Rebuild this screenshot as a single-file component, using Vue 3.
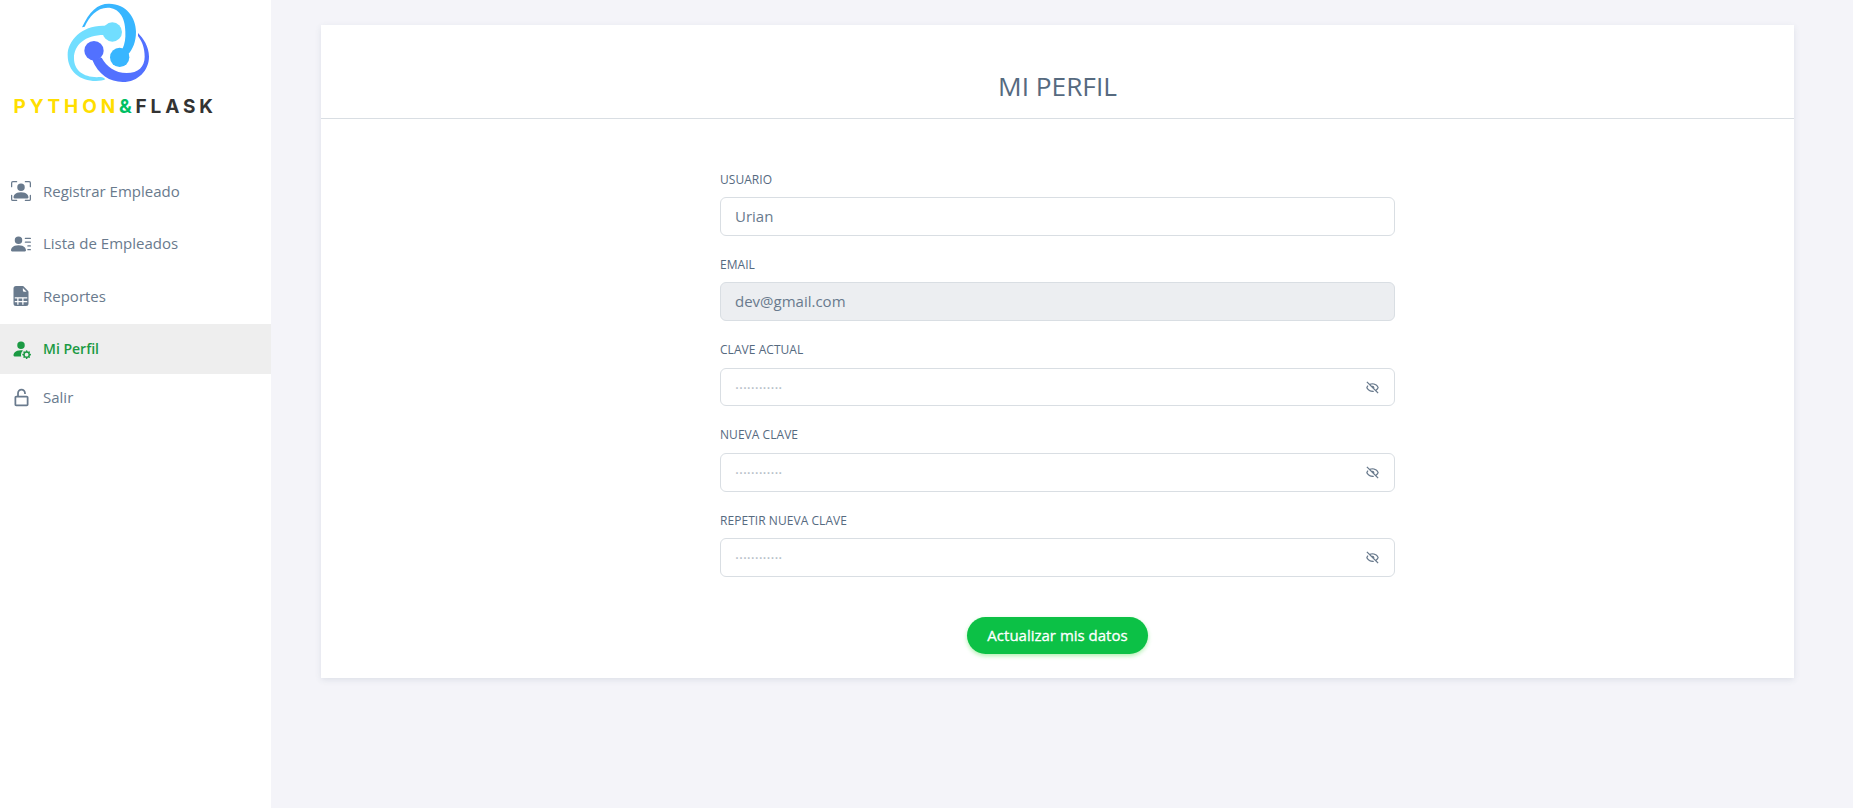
<script setup>
const menu = [
  {
    label: 'Registrar Empleado', cls: 'first', box: '0 0 16 16',
    d: 'M1.5 1a.5.5 0 0 0-.5.5v3a.5.5 0 0 1-1 0v-3A1.5 1.5 0 0 1 1.5 0h3a.5.5 0 0 1 0 1h-3zM11 .5a.5.5 0 0 1 .5-.5h3A1.5 1.5 0 0 1 16 1.5v3a.5.5 0 0 1-1 0v-3a.5.5 0 0 0-.5-.5h-3a.5.5 0 0 1-.5-.5zM.5 11a.5.5 0 0 1 .5.5v3a.5.5 0 0 0 .5.5h3a.5.5 0 0 1 0 1h-3A1.5 1.5 0 0 1 0 14.5v-3a.5.5 0 0 1 .5-.5zm15 0a.5.5 0 0 1 .5.5v3a1.5 1.5 0 0 1-1.5 1.5h-3a.5.5 0 0 1 0-1h3a.5.5 0 0 0 .5-.5v-3a.5.5 0 0 1 .5-.5zM3 14s-1 0-1-1 1-4 6-4 6 3 6 4-1 1-1 1H3zm8-9a3 3 0 1 1-6 0 3 3 0 0 1 6 0z',
  },
  {
    label: 'Lista de Empleados', cls: '', box: '0 0 16 16',
    d: 'M6 8a3 3 0 1 0 0-6 3 3 0 0 0 0 6zm-5 6s-1 0-1-1 1-4 6-4 6 3 6 4-1 1-1 1H1zM11 3.5a.5.5 0 0 1 .5-.5h4a.5.5 0 0 1 0 1h-4a.5.5 0 0 1-.5-.5zm.5 2.5a.5.5 0 0 0 0 1h4a.5.5 0 0 0 0-1h-4zm2 3a.5.5 0 0 0 0 1h2a.5.5 0 0 0 0-1h-2zm0 3a.5.5 0 0 0 0 1h2a.5.5 0 0 0 0-1h-2z',
  },
  {
    label: 'Reportes', cls: '', box: '0 0 16 16',
    d: 'M6 12v-2h3v2H6zM9.293 0H4a2 2 0 0 0-2 2v12a2 2 0 0 0 2 2h8a2 2 0 0 0 2-2V4.707A1 1 0 0 0 13.707 4L10 .293A1 1 0 0 0 9.293 0zM9.5 3.5v-2l3 3h-2a1 1 0 0 1-1-1zM3 9h10v1h-3v2h3v1h-3v2H9v-2H6v2H5v-2H3v-1h2v-2H3V9z',
  },
  {
    label: 'Mi Perfil', cls: 'active', box: '0 0 16 16',
    d: 'M11 5a3 3 0 1 1-6 0 3 3 0 0 1 6 0Zm-9 8c0 1 1 1 1 1h5.256A4.493 4.493 0 0 1 8 12.5a4.49 4.49 0 0 1 1.544-3.393C9.077 9.038 8.564 9 8 9c-5 0-6 3-6 4Zm9.886-3.54c.18-.613 1.048-.613 1.229 0l.043.148a.64.64 0 0 0 .921.382l.136-.074c.561-.306 1.175.308.87.869l-.075.136a.64.64 0 0 0 .382.92l.149.045c.612.18.612 1.048 0 1.229l-.15.043a.64.64 0 0 0-.38.921l.074.136c.305.561-.309 1.175-.87.87l-.136-.075a.64.64 0 0 0-.92.382l-.045.149c-.18.612-1.048.612-1.229 0l-.043-.15a.64.64 0 0 0-.921-.38l-.136.074c-.561.305-1.175-.309-.87-.87l.075-.136a.64.64 0 0 0-.382-.92l-.148-.045c-.613-.18-.613-1.048 0-1.229l.148-.043a.64.64 0 0 0 .382-.921l-.074-.136c-.306-.561.308-1.175.869-.87l.136.075a.64.64 0 0 0 .92-.382l.045-.148ZM14 12.5a1.5 1.5 0 1 0-3 0 1.5 1.5 0 0 0 3 0Z',
  },
  {
    label: 'Salir', cls: 'exit', box: '0 0 24 24',
    d: 'M17 8V7c0-2.757-2.243-5-5-5S7 4.243 7 7v3H6c-1.103 0-2 .897-2 2v8c0 1.103.897 2 2 2h12c1.103 0 2-.897 2-2v-8c0-1.103-.897-2-2-2H9V7c0-1.654 1.346-3 3-3s3 1.346 3 3v1h2zm1 4 .002 8H6v-8h12z',
  },
]

const fields = [
  { id: 'usuario', label: 'Usuario', type: 'text', value: 'Urian' },
  { id: 'email', label: 'Email', type: 'text', value: 'dev@gmail.com', disabled: true },
  { id: 'actual', label: 'Clave actual', type: 'password', value: '' },
  { id: 'nueva', label: 'Nueva clave', type: 'password', value: '' },
  { id: 'repetir', label: 'Repetir nueva clave', type: 'password', value: '' },
]
const dots = '············'
const hide = 'M12 19c.946 0 1.81-.103 2.598-.281l-1.757-1.757c-.273.021-.55.038-.841.038-5.351 0-7.424-3.846-7.926-5a8.642 8.642 0 0 1 1.508-2.297L4.184 8.305c-1.538 1.667-2.121 3.346-2.132 3.379a.994.994 0 0 0 0 .633C2.073 12.383 4.367 19 12 19zm0-14c-1.837 0-3.346.396-4.604.981L3.707 2.293 2.293 3.707l18 18 1.414-1.414-3.319-3.319c2.614-1.951 3.547-4.615 3.561-4.657a.994.994 0 0 0 0-.633C21.927 11.617 19.633 5 12 5zm4.972 10.558-2.28-2.28c.19-.39.308-.819.308-1.278 0-1.641-1.359-3-3-3-.459 0-.888.118-1.277.309L8.915 7.501A9.26 9.26 0 0 1 12 7c5.351 0 7.424 3.846 7.926 5-.302.692-1.166 2.342-2.954 3.558z'
</script>

<template>
  <div class="layout">
    <aside class="sidebar">
      <div class="brand">
        <svg class="mark" viewBox="0 0 285 264">
          <g fill="#38b6ff">
            <path d="M66 82C88 35 112 11 147 11C200 11 228 55 228 95C228 125 218 148 205 162L187 148C195 130 197 115 196 95C196 50 175 23 143 23C110 23 88 50 74 80Z" />
            <circle cx="179" cy="172" r="29" />
          </g>
          <g fill="#71deff">
            <path d="M140 78C70 72 23 120 23 165C23 215 60 243 108 243C120 243 130 241 136 238C134 234 128 232 122 231C75 235 42 215 42 175C42 135 75 105 132 105Z" />
            <circle cx="157" cy="96" r="29" />
          </g>
          <g fill="#5271ff">
            <path d="M96 178C115 225 150 246 188 246C235 246 267 210 267 170C267 140 250 115 234 99L234 108C247 125 254 145 254 170C254 200 235 219 200 219C165 219 140 200 125 173Z" />
            <circle cx="102" cy="152" r="29" />
          </g>
        </svg>
        <div class="word"><span class="py">PYTHON</span><span class="amp">&amp;</span><span class="fl">FLASK</span></div>
      </div>
      <nav class="menu">
        <a v-for="m in menu" :key="m.label" class="item" :class="m.cls">
          <svg class="icon" :viewBox="m.box"><path :d="m.d" /></svg>
          <span>{{ m.label }}</span>
        </a>
      </nav>
    </aside>
    <main class="content">
      <section class="card">
        <h1 class="title">MI PERFIL</h1>
        <form class="form">
          <div v-for="f in fields" :key="f.id" class="field">
            <label :for="f.id">{{ f.label }}</label>
            <div class="control" :class="{ disabled: f.disabled }">
              <input :id="f.id" :type="f.type" :value="f.value" :disabled="f.disabled" :placeholder="f.type === 'password' ? dots : ''" autocomplete="off" />
              <svg v-if="f.type === 'password'" class="eye" viewBox="0 0 24 24"><path :d="hide" /></svg>
            </div>
          </div>
          <button type="button" class="submit">Actualizar mis datos</button>
        </form>
      </section>
    </main>
  </div>
</template>

<style>
body {
  margin: 0;
  background: #f4f4f9;
}
</style>

<style scoped>
.layout {
  display: flex;
  height: 808px;
  overflow: hidden;
  font-family: "Open Sans", "Noto Sans", sans-serif;
  font-size: 15px;
  line-height: 1.53;
  color: #697a8d;
}
.sidebar {
  width: 271px;
  flex: none;
  background: #fff;
}
.brand {
  height: 165px;
}
.mark {
  display: block;
  width: 95px;
  height: 88px;
  margin-left: 60px;
}
.word {
  margin: 9px 0 0 13.5px;
  height: 20px;
  line-height: 20px;
  font-family: Inter, sans-serif;
  font-weight: 700;
  font-size: 19px;
  letter-spacing: 3.85px;
  white-space: nowrap;
}
.py { color: #ffde00; }
.amp { color: #00bf63; }
.fl { color: #333; }
.menu {
  display: flex;
  flex-direction: column;
}
.item {
  display: flex;
  align-items: center;
  height: 52.6px;
  padding-left: 11px;
  gap: 12px;
}
.icon {
  width: 20px;
  height: 20px;
  fill: currentColor;
  flex: none;
}
.active {
  height: 50px;
  margin-top: 1.2px;
  background: #eee;
  color: #1b9a43;
  font-weight: 600;
  font-size: 14px;
}
.exit {
  height: 47px;
  padding-left: 10.5px;
}
.exit .icon {
  width: 21px;
  height: 21px;
  margin-right: -0.5px;
}
.content {
  flex: 1;
  padding: 25px 59px 0 50px;
}
.card {
  height: 653px;
  background: #fff;
  box-shadow: 0 2px 6px rgba(67, 89, 113, 0.12);
}
.title {
  box-sizing: border-box;
  height: 94px;
  margin: 0;
  padding-top: 42px;
  border-bottom: 1px solid #d9dee3;
  text-align: center;
  font-size: 26.25px;
  font-weight: 400;
  line-height: 38px;
  color: #566a7f;
}
.form {
  display: flex;
  flex-direction: column;
  width: 675px;
  margin: 0 auto;
  padding-top: 51.8px;
}
.field {
  margin-bottom: 20px;
}
.field label {
  display: block;
  margin-bottom: 8px;
  font-size: 12px;
  line-height: 18.36px;
  letter-spacing: 0.05px;
  text-transform: uppercase;
  color: #566a7f;
}
.control {
  box-sizing: border-box;
  display: flex;
  align-items: center;
  height: 38.86px;
  padding: 0 14px;
  border: 1px solid #d9dee3;
  border-radius: 6px;
  background: #fff;
}
.disabled {
  background: #eceef1;
}
.control input {
  flex: 1;
  min-width: 0;
  padding: 0;
  border: 0;
  outline: 0;
  background: transparent;
  font: inherit;
  color: #697a8d;
}
.control input::placeholder {
  color: #b4bdc6;
  opacity: 1;
}
.eye {
  width: 15px;
  height: 15px;
  fill: #697a8d;
}
.submit {
  align-self: center;
  width: 181px;
  height: 37px;
  margin-top: 20.3px;
  padding: 0;
  border: 0;
  border-radius: 19px;
  background: #0cc146;
  box-shadow: 0 2px 4px rgba(60, 220, 60, 0.4);
  color: #fff;
  font: inherit;
  -webkit-text-stroke: 0.3px #fff;
}
</style>
